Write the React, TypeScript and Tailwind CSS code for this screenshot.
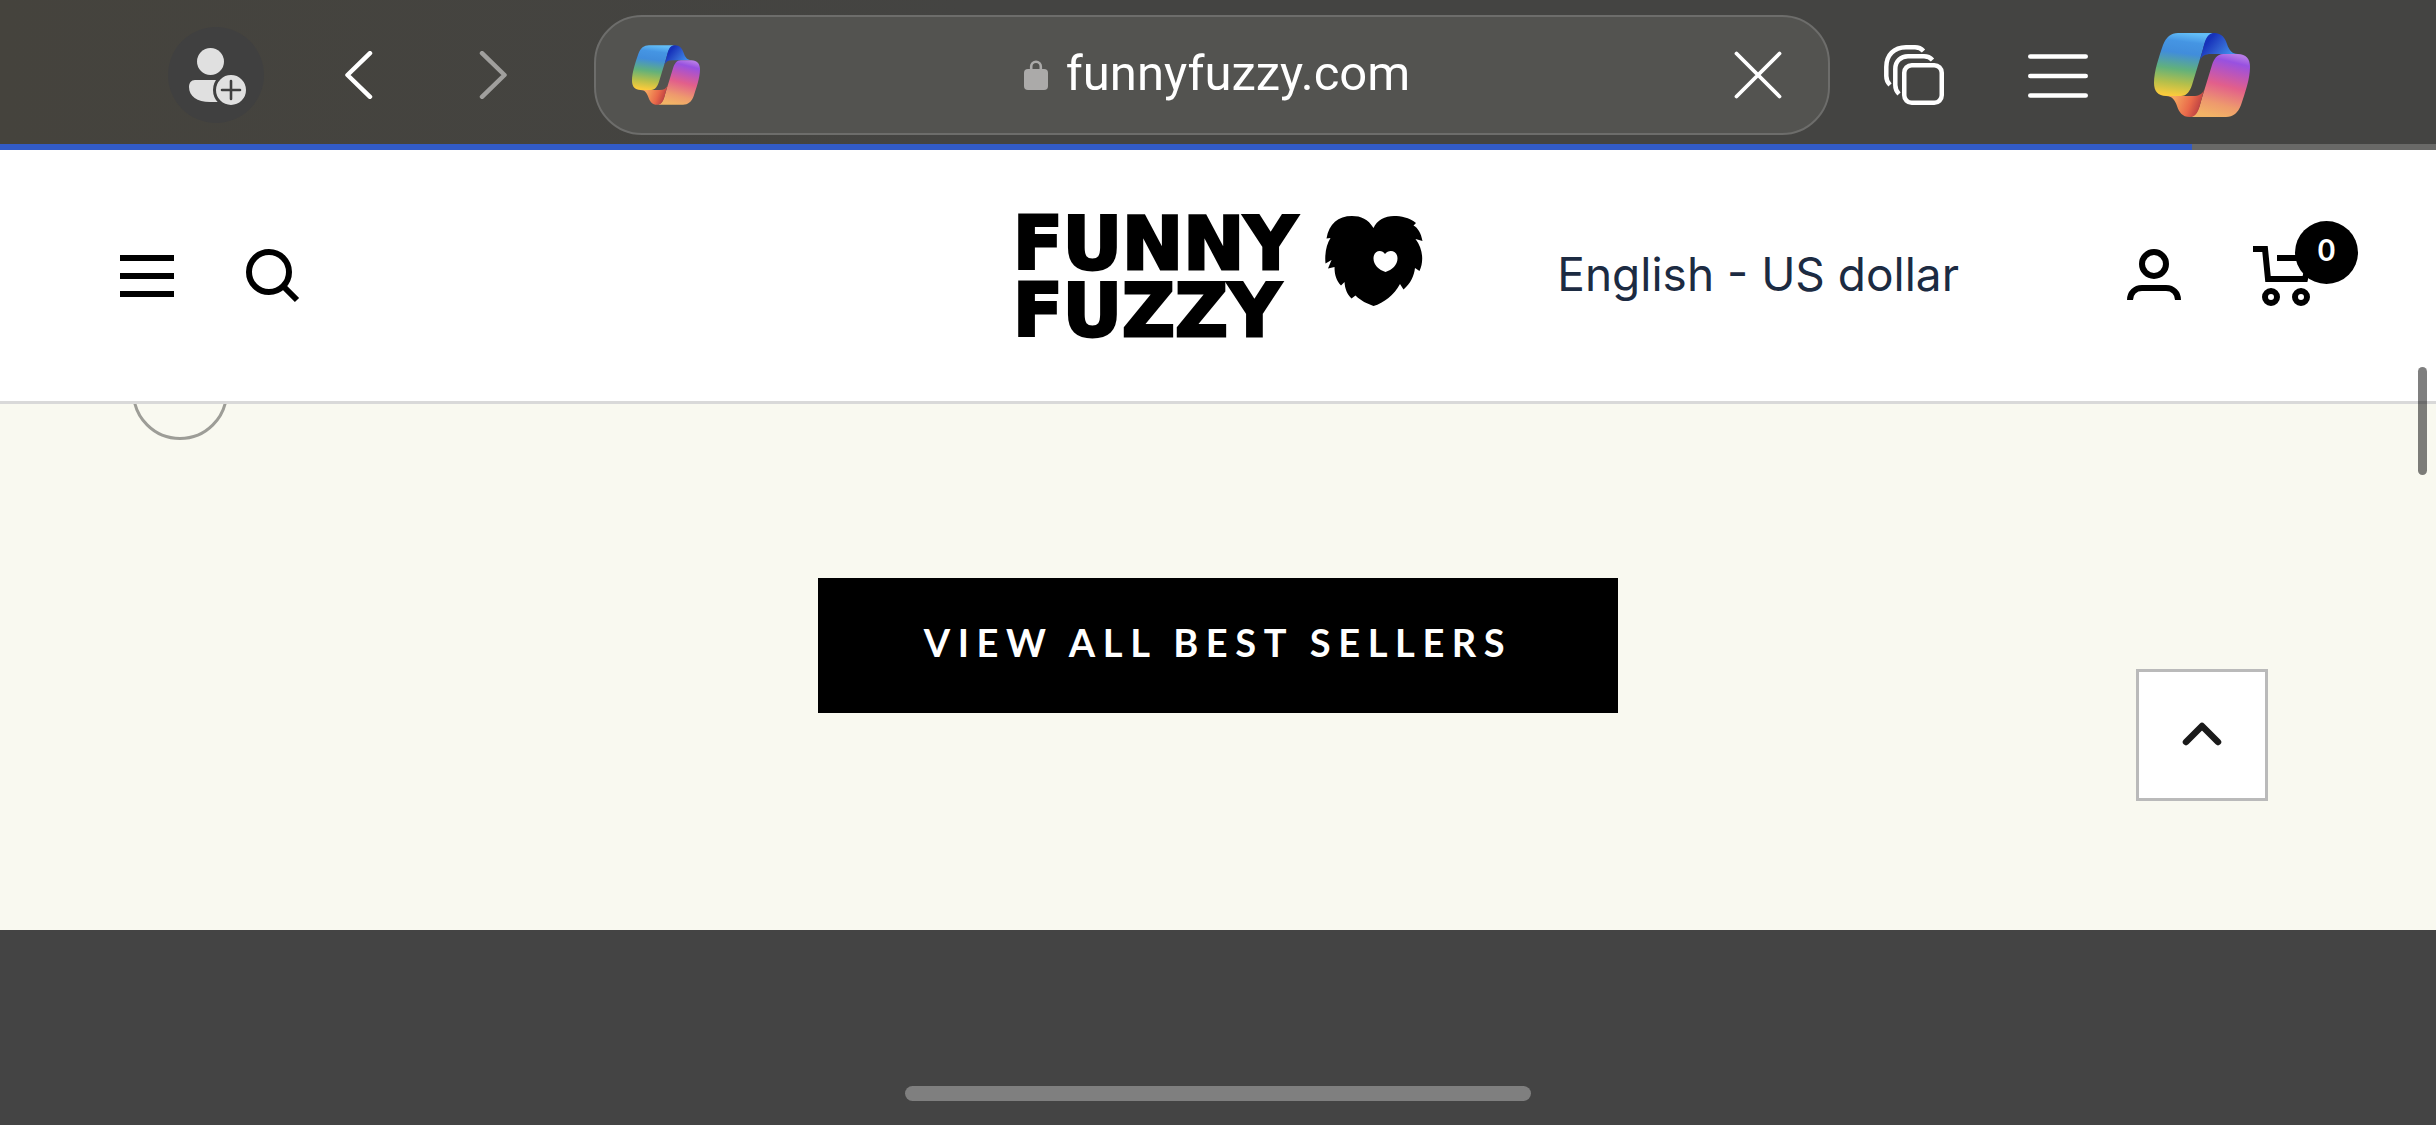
import React from "react";

const CopilotIcon: React.FC<{ id: string; className: string }> = ({ id, className }) => (
  <svg viewBox="0 0 96 84" className={className} aria-hidden="true">
    <defs>
      <linearGradient id={`${id}-cool`} gradientUnits="userSpaceOnUse" x1="32" y1="0" x2="24" y2="63">
        <stop offset="0" stopColor="#62bdf7" />
        <stop offset="0.14" stopColor="#4595e3" />
        <stop offset="0.32" stopColor="#418ddb" />
        <stop offset="0.58" stopColor="#62b17b" />
        <stop offset="0.8" stopColor="#b4bf4b" />
        <stop offset="1" stopColor="#fbcb3c" />
      </linearGradient>
      <linearGradient id={`${id}-navy`} gradientUnits="userSpaceOnUse" x1="54" y1="4" x2="76" y2="22">
        <stop offset="0.1" stopColor="#1632bb" />
        <stop offset="0.5" stopColor="#2d59cc" />
        <stop offset="1" stopColor="#3f8cea" />
      </linearGradient>
      <linearGradient id={`${id}-warm`} gradientUnits="userSpaceOnUse" x1="34" y1="0" x2="18" y2="63">
        <stop offset="0" stopColor="#f2b366" />
        <stop offset="0.2" stopColor="#ee9a6d" />
        <stop offset="0.5" stopColor="#e25f8b" />
        <stop offset="0.72" stopColor="#b955bd" />
        <stop offset="0.88" stopColor="#9851e0" />
        <stop offset="1" stopColor="#b67be6" />
      </linearGradient>
      <linearGradient id={`${id}-red`} gradientUnits="userSpaceOnUse" x1="50" y1="8" x2="76" y2="18">
        <stop offset="0" stopColor="#bb3f42" />
        <stop offset="0.4" stopColor="#e9694a" />
        <stop offset="1" stopColor="#f6a55e" />
      </linearGradient>
    </defs>
    <path
      d="M24 0H61C54 0 51 8 49 16L38 52C36 58 33 63 27 63H12C4 63 0 58 0 50C0 38 5 24 9 12C12 4 17 0 24 0Z"
      fill={`url(#${id}-cool)`}
    />
    <path
      d="M60 0C68 0 71 5 73 11C75 17 78 21 84 21H57C51 21 48 23 46 27L50 12C52 4 55 0 60 0Z"
      fill={`url(#${id}-navy)`}
    />
    <g transform="rotate(180 48 42)">
      <path
        d="M24 0H61C54 0 51 8 49 16L38 52C36 58 33 63 27 63H12C4 63 0 58 0 50C0 38 5 24 9 12C12 4 17 0 24 0Z"
        fill={`url(#${id}-warm)`}
      />
      <path
        d="M60 0C68 0 71 5 73 11C75 17 78 21 84 21H57C51 21 48 23 46 27L50 12C52 4 55 0 60 0Z"
        fill={`url(#${id}-red)`}
      />
    </g>
  </svg>
);

const FuzzyHeart: React.FC = () => (
  <svg viewBox="0 0 98 90" className="w-[98px] h-[90px]" aria-hidden="true">
    <path d="M48.500 12C43 3 36 0 27 0C13 0 4 8 1.500 22.500L5.500 22C1.500 28 -0.500 38 0.500 47.500L6.500 44L3 52.500L9.500 51C9.500 59 11.500 65 16 69.500L19.500 66C20 73 22 78 26.500 82.500L30.500 79.500C36 85 42 87.500 48.500 90C59 87 69 79 75 68L78.500 73.500C86 67 89 60 90 52L94.500 55C99 45 98 33 90.500 23L97.500 25C96 17 93 12 88.500 9.500L91 7C84 1.500 76 0 69 0C60 0 52 4 48.500 12Z" />
    <path
      d="M60 38C57 33 48.500 34 48.500 42.500C48.500 49 54 54 60.500 56C67 54 72.500 49 72.500 42.500C72.500 34 63.500 33 60 38Z"
      fill="#fff"
    />
  </svg>
);

const BrowserBar: React.FC = () => (
  <div className="flex items-center h-36 pt-1.5 pl-[168px] pr-[186px] bg-linear-to-r from-[#45433d] to-[#444442] to-40%">
    <button aria-label="Add profile" className="size-24 shrink-0 rounded-full bg-[#404040]">
      <svg viewBox="0 0 96 96" fill="#e0e0e0" aria-hidden="true">
        <circle cx="42.500" cy="34.500" r="13.500" />
        <path d="M27 53H52V75H42C29 75 21 69 21 60C21 56 23 53 27 53Z" />
        <circle cx="63" cy="63" r="16.500" stroke="#404040" strokeWidth="3" />
        <path d="M63 54V72M54 63H72" stroke="#404040" strokeWidth="2.600" strokeLinecap="round" />
      </svg>
    </button>
    <button aria-label="Back" className="size-12 ml-[72px] shrink-0">
      <svg viewBox="0 0 48 48" fill="none" stroke="#fff" strokeWidth="4.500" strokeLinecap="round" strokeLinejoin="round" aria-hidden="true">
        <path d="M34 2.200L11.500 24L34 45.800" />
      </svg>
    </button>
    <button aria-label="Forward" className="size-12 ml-[84px] shrink-0">
      <svg viewBox="0 0 48 48" fill="none" stroke="#a09f9d" strokeWidth="4.500" strokeLinecap="round" strokeLinejoin="round" aria-hidden="true">
        <path d="M14 2.200L36.500 24L14 45.800" />
      </svg>
    </button>

    <div className="flex flex-1 items-center justify-between h-30 ml-[78px] px-9 rounded-[48px] border-2 border-[#6d6d6b] bg-[#535350]">
      <CopilotIcon id="small" className="w-17 h-15" />
      <a href="#" className="flex items-center gap-[18px] font-['Roboto'] text-[49px] leading-none text-white">
        <svg viewBox="0 0 24 30" className="w-6 h-[30px]" aria-hidden="true">
          <rect y="9" width="24" height="21" rx="4" fill="#abaaa9" />
          <path d="M7.200 11V6.500A4.800 4.800 0 0 1 16.800 6.500V11" fill="none" stroke="#abaaa9" strokeWidth="2.600" />
        </svg>
        <span className="pb-1">funnyfuzzy.com</span>
      </a>
      <button aria-label="Stop loading" className="size-12 mr-2.5">
        <svg viewBox="0 0 48 48" stroke="#fff" strokeWidth="3.800" strokeLinecap="round" aria-hidden="true">
          <path d="M2.500 2.500L45.500 45.500M45.500 2.500L2.500 45.500" />
        </svg>
      </button>
    </div>

    <button aria-label="Tabs" className="size-15 ml-[54px] shrink-0">
      <svg viewBox="0 0 60 60" fill="none" stroke="#fff" strokeWidth="4.500" aria-hidden="true">
        <rect x="20.250" y="20.250" width="37.500" height="37.500" rx="7.500" />
        <path d="M15 49C12.500 46.500 11.300 43.500 11.300 40V24C11.300 16 17 11.300 24 11.300H40C44 11.300 46.500 12.800 48.500 15" />
        <path d="M6 40C3.500 37.500 2.300 34.500 2.300 31V22C2.300 10 10 2.300 22 2.300H31C35 2.300 37.500 3.800 39.500 6" />
      </svg>
    </button>
    <button aria-label="Browser menu" className="size-15 ml-[84px] shrink-0">
      <svg viewBox="0 0 60 60" stroke="#fff" strokeWidth="4.600" strokeLinecap="round" aria-hidden="true">
        <path d="M2.300 11.500H57.700M2.300 31H57.700M2.300 50.500H57.700" />
      </svg>
    </button>
    <button aria-label="Copilot" className="ml-[66px] shrink-0">
      <CopilotIcon id="large" className="w-24 h-21" />
    </button>
  </div>
);

const SiteHeader: React.FC = () => (
  <header className="grid grid-cols-[1fr_auto_1fr] items-center h-[254px] px-[120px] border-b-3 border-[#d9d9d9] bg-white">
    <div className="flex items-center gap-[72px]">
      <button aria-label="Menu" className="w-[54px]">
        <svg viewBox="0 0 54 54" stroke="#000" strokeWidth="6" aria-hidden="true">
          <path d="M0 9H54M0 27H54M0 45H54" />
        </svg>
      </button>
      <button aria-label="Search" className="w-[54px]">
        <svg viewBox="0 0 54 54" fill="none" stroke="#000" strokeWidth="6" aria-hidden="true">
          <circle cx="23" cy="23" r="20" />
          <path d="M37 37L51 51" />
        </svg>
      </button>
    </div>

    <a href="#" className="flex items-start gap-7 text-black">
      <span className="-mt-1.5 -mb-2 font-['DejaVu_Sans'] font-bold text-[73px] leading-[67px] [font-kerning:none] [-webkit-text-stroke:3px_black]">
        FUNNY
        <br />
        FUZZY
      </span>
      <FuzzyHeart />
    </a>

    <div className="flex items-center justify-end">
      <a href="#" className="pb-1 font-['Inter'] text-[46px] leading-none whitespace-nowrap text-[#1c2b42]">
        English - US dollar
      </a>
      <a href="#" aria-label="Account" className="ml-[168px]">
        <svg viewBox="0 0 54 54" className="size-[54px]" fill="none" stroke="#000" strokeWidth="6" aria-hidden="true">
          <circle cx="27" cy="15" r="12" />
          <path d="M3 51C3 44 8 39 15 39H39C46 39 51 44 51 51" />
        </svg>
      </a>
      <a href="#" aria-label="Cart" className="relative ml-[72px]">
        <svg viewBox="0 0 63 60" className="w-[63px] h-15" fill="none" stroke="#000" strokeWidth="6" aria-hidden="true">
          <path d="M0 3H12L15 33H52L57 12H24" />
          <circle cx="18" cy="51" r="6" />
          <circle cx="48" cy="51" r="6" />
        </svg>
        <span className="absolute -top-[25px] -right-[42px] flex items-center justify-center size-[63px] pb-1.5 rounded-full bg-black font-['Lato'] font-bold text-[30px] leading-none text-white">
          0
        </span>
      </a>
    </div>
  </header>
);

const App: React.FC = () => {
  const progress = 90;

  return (
    <div className="relative flex flex-col min-h-screen bg-[#444444]">
      <BrowserBar />
      <div className="h-1.5 bg-[#696967]">
        <div className="h-full bg-[#325bc7]" style={{ width: `${progress}%` }} />
      </div>
      <SiteHeader />

      <main className="relative flex flex-col flex-1 overflow-hidden bg-[#f9f9f0]">
        <button
          aria-label="Previous slide"
          className="size-24 shrink-0 -mt-15 ml-[132px] rounded-full border-3 border-[#9d9d97]"
        />
        <div className="flex justify-center mt-[138px] mb-[217px]">
          <a
            href="#"
            className="px-[106px] pb-1.5 bg-black font-['Lato'] font-bold text-[38px] leading-[129px] tracking-[0.2em] text-white"
          >
            VIEW ALL BEST SELLERS
          </a>
        </div>
        <button
          aria-label="Back to top"
          className="absolute right-[168px] bottom-[129px] flex items-center justify-center size-33 border-3 border-[#bababa] bg-white"
        >
          <svg viewBox="0 0 42 26" className="w-[42px] h-[26px]" fill="none" stroke="#1a1a1a" strokeWidth="6.500" strokeLinecap="round" strokeLinejoin="round" aria-hidden="true">
            <path d="M5 20L21 4L37 20" />
          </svg>
        </button>
      </main>

      <footer className="flex items-end justify-center h-[195px] pb-6">
        <div className="w-[626px] h-[15px] rounded-full bg-[#7f7f7f]" />
      </footer>

      {/* page scroll thumb */}
      <div className="absolute top-[367px] right-[9px] w-[9px] h-[108px] rounded-full bg-black/50" />
    </div>
  );
};

export default App;
